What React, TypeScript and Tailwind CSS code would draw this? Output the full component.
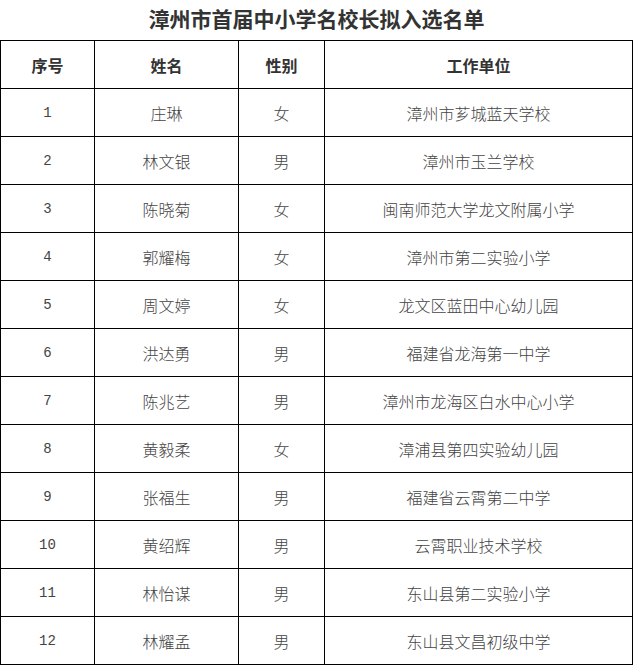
import React from 'react';

const rows = [
    ['1', '庄琳', '女', '漳州市芗城蓝天学校'],
    ['2', '林文银', '男', '漳州市玉兰学校'],
    ['3', '陈晓菊', '女', '闽南师范大学龙文附属小学'],
    ['4', '郭耀梅', '女', '漳州市第二实验小学'],
    ['5', '周文婷', '女', '龙文区蓝田中心幼儿园'],
    ['6', '洪达勇', '男', '福建省龙海第一中学'],
    ['7', '陈兆艺', '男', '漳州市龙海区白水中心小学'],
    ['8', '黄毅柔', '女', '漳浦县第四实验幼儿园'],
    ['9', '张福生', '男', '福建省云霄第二中学'],
    ['10', '黄绍辉', '男', '云霄职业技术学校'],
    ['11', '林怡谋', '男', '东山县第二实验小学'],
    ['12', '林耀孟', '男', '东山县文昌初级中学'],
];

export default function App() {
    return (
        <div className="w-[633px] h-[665px] bg-white font-['Noto_Sans_CJK_SC',sans-serif] text-[#333]">
            {/* Title */}
            <h1 className="h-10 pt-[5px] text-center text-[21px] leading-[27px] font-bold text-[#333]">
                漳州市首届中小学名校长拟入选名单
            </h1>

            {/* Table */}
            <table className="w-[633px] table-fixed border-collapse">
                <colgroup>
                    <col className="w-[94px]" />
                    <col className="w-[144px]" />
                    <col className="w-[86px]" />
                    <col />
                </colgroup>
                <thead>
                    <tr className="h-12">
                        <th className="border border-black text-[16px] font-semibold text-[#333]">序号</th>
                        <th className="border border-black text-[16px] font-semibold text-[#333]">姓名</th>
                        <th className="border border-black text-[16px] font-semibold text-[#333]">性别</th>
                        <th className="border border-black text-[16px] font-semibold text-[#333]">工作单位</th>
                    </tr>
                </thead>
                <tbody>
                    {rows.map((r) => (
                        <tr key={r[0]} className="h-12">
                            <td className="border border-black pt-0.5 text-center text-[14px] font-['Liberation_Mono','Noto_Sans_CJK_SC',monospace] text-[#444]">{r[0]}</td>
                            <td className="border border-black text-center text-[16px] font-light text-[#444]">{r[1]}</td>
                            <td className="border border-black text-center text-[16px] font-light text-[#444]">{r[2]}</td>
                            <td className="border border-black text-center text-[16px] font-light text-[#444]">{r[3]}</td>
                        </tr>
                    ))}
                </tbody>
            </table>
        </div>
    );
}
